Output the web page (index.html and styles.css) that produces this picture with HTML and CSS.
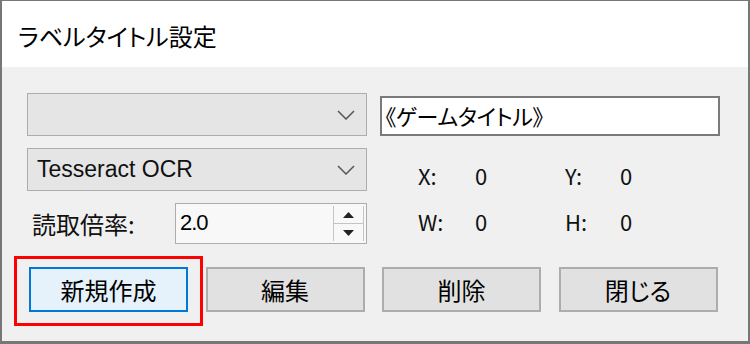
FILE: index.html
```html
<!DOCTYPE html>
<html lang="ja">
<head>
    <meta charset="UTF-8">
    <title>ラベルタイトル設定</title>
    <link rel="stylesheet" href="styles.css">
</head>
<body>
    <div class="window">
        <div class="titlebar">ラベルタイトル設定</div>
        <div class="content">
            <div class="fields">
                <div class="combo">
                    <span class="combo-text"></span>
                    <svg class="chevron" width="18" height="10" viewBox="0 0 18 10"><path d="M1 1 L9 9 L17 1" fill="none" stroke="#555" stroke-width="1.5"/></svg>
                </div>
                <div class="title-box">《ゲームタイトル》</div>

                <div class="combo">
                    <span class="combo-text">Tesseract OCR</span>
                    <svg class="chevron" width="18" height="10" viewBox="0 0 18 10"><path d="M1 1 L9 9 L17 1" fill="none" stroke="#555" stroke-width="1.5"/></svg>
                </div>
                <div class="coords coords-top">
                    <span>X:</span><span>0</span><span>Y:</span><span>0</span>
                </div>

                <div class="rate">
                    <span class="rate-label">読取倍率:</span>
                    <div class="spin">
                        <span class="spin-value">2.0</span>
                        <div class="spin-buttons">
                            <div class="spin-up"><svg width="11" height="6" viewBox="0 0 11 6"><path d="M5.5 0 L11 6 L0 6 Z" fill="#222"/></svg></div>
                            <div class="spin-down"><svg width="11" height="6" viewBox="0 0 11 6"><path d="M0 0 L11 0 L5.5 6 Z" fill="#222"/></svg></div>
                        </div>
                    </div>
                </div>
                <div class="coords coords-bottom">
                    <span>W:</span><span>0</span><span>H:</span><span>0</span>
                </div>
            </div>

            <div class="buttons">
                <button class="btn btn-default">新規作成</button>
                <button class="btn">編集</button>
                <button class="btn">削除</button>
                <button class="btn">閉じる</button>
            </div>
        </div>
    </div>
</body>
</html>
```

FILE: styles.css
```css
body {
    margin: 0;
    padding: 0;
    background-color: #fff;
    font-family: "Noto Sans CJK JP", "Noto Sans", sans-serif;
    font-feature-settings: "palt";
    color: #000;
}

.window {
    width: 750px;
    height: 344px;
    box-sizing: border-box;
    border-style: solid;
    border-color: #777;
    border-width: 1px 2px 3px 2px;
    background-color: #f0f0f0;
    display: flex;
    flex-direction: column;
}

.titlebar {
    height: 66px;
    background-color: #fff;
    padding-left: 16px;
    font-size: 24px;
    line-height: 70px;
    box-sizing: border-box;
}

.content {
    padding: 26px 0 0 25px;
}

.fields {
    display: grid;
    grid-template-columns: 340px 340px;
    grid-template-rows: 43px 43px 41px;
    column-gap: 13px;
    row-gap: 12px;
}

.combo {
    display: flex;
    align-items: center;
    justify-content: space-between;
    box-sizing: border-box;
    border: 1px solid #adadad;
    background-color: #e5e5e5;
    padding: 0 11px 0 9px;
    font-family: "Liberation Sans", "Noto Sans CJK JP", sans-serif;
    font-size: 23px;
    color: #111;
}

.chevron {
    flex: none;
}

.title-box {
    align-self: end;
    height: 40px;
    box-sizing: border-box;
    border: 2px solid #7a7a7a;
    background-color: #fff;
    padding-left: 3px;
    font-size: 22px;
    line-height: 34px;
    letter-spacing: -0.3px;
}

.coords {
    display: grid;
    grid-template-columns: 57px 90px 55px auto;
    padding-left: 38px;
    font-size: 22px;
    color: #111;
}

.coords-top {
    align-self: end;
    line-height: 32px;
}

.coords-bottom {
    align-self: center;
    line-height: 32px;
    margin-top: -6px;
}

.rate {
    display: flex;
    align-items: center;
}

.rate-label {
    width: 143px;
    padding-left: 5px;
    font-size: 24px;
    color: #111;
}

.spin {
    flex: 1;
    height: 41px;
    display: flex;
    box-sizing: border-box;
    border: 1px solid #adadad;
    background-color: #f8f8f8;
}

.spin-value {
    flex: 1;
    padding-left: 4px;
    font-family: "Liberation Sans", sans-serif;
    font-size: 22px;
    line-height: 38px;
    letter-spacing: -1px;
}

.spin-buttons {
    width: 29px;
    margin: 2px 2px 2px 0;
    border-left: 1px solid #c4c4c4;
    border-right: 1px solid #c4c4c4;
    display: flex;
    flex-direction: column;
}

.spin-up,
.spin-down {
    flex: 1;
    display: flex;
    align-items: center;
    justify-content: center;
}

.spin-up {
    border-bottom: 1px solid #c4c4c4;
}

.buttons {
    display: flex;
    gap: 17.5px;
    margin-top: 23px;
    padding-left: 2px;
}

.btn {
    width: 159px;
    height: 45px;
    box-sizing: border-box;
    border: 2px solid #adadad;
    background-color: #e1e1e1;
    font-family: "Noto Sans CJK JP", sans-serif;
    font-feature-settings: "palt";
    font-size: 24px;
    color: #000;
    padding: 0;
}

.btn-default {
    position: relative;
    border-color: #0078d7;
    background-color: #e5f1fb;
}

.btn-default::after {
    content: "";
    position: absolute;
    top: -13px;
    bottom: -16px;
    left: -17px;
    right: -17px;
    border: 3px solid #f00;
}
```
